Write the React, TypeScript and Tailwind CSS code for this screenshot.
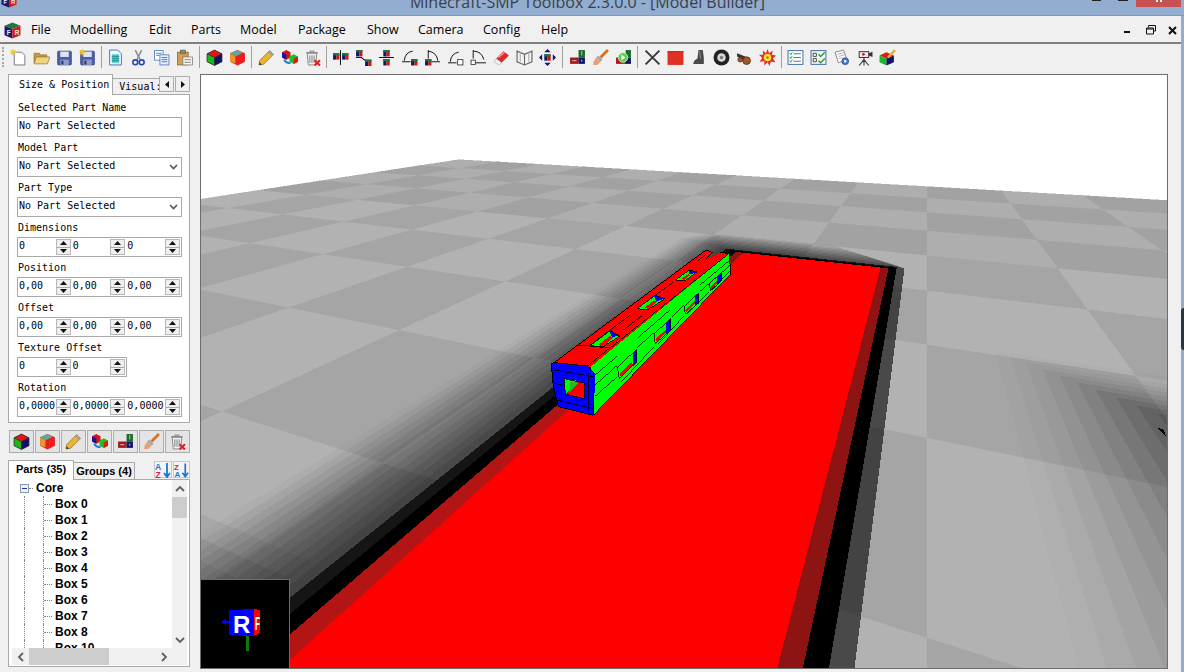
import React from "react";

const mono = { fontFamily: '"DejaVu Sans Mono", monospace' };

/* ---------- ground plane projection of the 3D view ---------- */
const P = (i: number, s: number): number[] => {
  const h = 1 / (0.00182 + 0.00104 * i);
  const d = h / (1 - (h * s) / 1712);
  return [927 + s * d, 88 + d];
};
const pts = (a: number[][]) => a.map((p) => p[0].toFixed(1) + "," + p[1].toFixed(1)).join(" ");
const quad = (i0: number, i1: number, s0: number, s1: number) => pts([P(i0, s0), P(i1, s0), P(i1, s1), P(i0, s1)]);
const S = 0.726;
const far = (i: number): number[] => {
  const h = 1 / (0.00182 + 0.00104 * i);
  return [2000, 88 + (h / 1712) * 2785];
};

function Floor() {
  const cells: React.ReactNode[] = [];
  for (let i = -1; i < 8; i++) {
    for (let j = -9; j < 5; j++) {
      if (i === -1 && j > 0) continue;
      if (i === 0 && j > 3) continue;
      const light = ((i + j) % 2 + 2) % 2 === 0;
      const isFar = i >= 4;
      const fill = light ? (isFar ? "#aeaeae" : "#b2b2b2") : isFar ? "#a2a2a2" : "#a5a5a5";
      cells.push(<polygon key={i + "_" + j} points={quad(i, i + 1, j * S, (j + 1) * S)} fill={fill} stroke={fill} strokeWidth="0.5" />);
    }
  }
  return <g>{cells}</g>;
}

const iN = -1.5;
function Shadow() {
  const cols = [0xae, 0xa6, 0x9d, 0x94, 0x8b, 0x82, 0x79, 0x70, 0x67, 0x5e, 0x55, 0x4d];
  const out: React.ReactNode[] = [];
  let prev = 1;
  const n = cols.length;
  cols.forEach((c, k) => {
    const f = c / 178;
    const a = 1 - f / prev;
    prev = f;
    const t = (n - 1 - k) / (n - 1);
    const sL = -1.282 - (n - 1 - k) * 0.032;
    const iT = 3.545 + (n - 1 - k) * 0.045;
    const sX = -0.125 - t * 0.5;
    out.push(
      <polygon
        key={k}
        points={pts([P(iN, sL), P(iT - t * 0.28, sL), P(iT, sL + t * 0.14), P(iT, sX), P(3.5, -0.125), P(iN, -0.125)])}
        fill="#000"
        fillOpacity={a}
      />
    );
  });
  const lowLeft = [-0.45, -0.52, -0.58, -0.63, -0.67];
  const fan: React.ReactNode[] = [];
  for (let k = 0; k < 11; k++) {
    const lo = -1.2 + k * 0.2;
    const hi = 2.05 - k * 0.05;
    const s = 0.26 + k * 0.05;
    fan.push(<polygon key={k} points={pts([P(hi, s), far(hi), far(lo), P(lo, s)])} fill="#000" fillOpacity={0.015 + 0.009 * k} />);
  }
  return (
    <g>
      {lowLeft.map((v, k) => (
        <polygon key={k} points={quad(-1.5, v, -9, -1.3)} fill="#000" fillOpacity={0.05} />
      ))}
      {fan}
      {out}
    </g>
  );
}

function Platform() {
  return (
    <g>
      <polygon points={quad(iN, 3.53, -1.25, -0.169)} fill="#151515" />
      <polygon points={quad(iN, 3.5, -1.211, -0.169)} fill="#000" />
      <polygon points={quad(iN, 3.46, -1.166, -0.214)} fill="#8e1414" />
      <polygon points={quad(iN, 3.1, -1.166, -1.11)} fill="#b31414" />
      <polygon points={quad(iN, 3.46, -1.114, -0.258)} fill="#ff0000" />
      <polygon points="1158,428 1164,430 1166,437" fill="#000" />
    </g>
  );
}

function Train() {
  const line = (d: string, w = 3) => <path d={d} stroke="#000" strokeWidth={w} fill="none" />;
  return (
    <g transform="translate(530 230) scale(0.33333)">
      <polygon points="72,398 528,60 548,68 528,88 570,68 598,70 182,412 166,408" fill="#ff0000" />
      <polygon points="182,410 598,70 602,132 190,556" fill="#00ff00" />
      {/* front */}
      <polygon points="64,402 75,398 170,408 195,430 192,556 85,530 70,470" fill="#0000ff" />
      <polygon points="102,446 165,460 162,506 106,492" fill="#ff0000" />
      <polygon points="102,446 140,452 112,488 106,492" fill="#00ff00" />
      <polygon points="120,455 145,458 118,486" fill="#22bb22" />
      {/* top windows */}
      <polygon points="182,346 240,302 270,318 216,352" fill="#00ff00" />
      <polygon points="238,302 270,316 246,322" fill="#0000ff" />
      <polygon points="205,345 240,318 250,322 220,350" fill="#ff0000" />
      <polygon points="322,236 374,196 405,206 352,240" fill="#00ff00" />
      <polygon points="372,196 405,206 378,214" fill="#0000ff" />
      <polygon points="345,232 372,212 382,214 355,238" fill="#ff0000" />
      <polygon points="436,150 478,120 500,126 466,152" fill="#00ff00" />
      <polygon points="474,120 500,126 480,134" fill="#0000ff" />
      <polygon points="455,146 475,132 480,136 462,150" fill="#ff0000" />
      {/* side windows */}
      <polygon points="270,430 305,396 308,404 272,440" fill="#ff0000" />
      <polygon points="308,370 320,358 320,396 308,406" fill="#0000ff" />
      <polygon points="378,326 408,298 410,304 380,336" fill="#ff0000" />
      <polygon points="408,280 422,266 422,298 408,310" fill="#0000ff" />
      <polygon points="466,240 494,214 496,220 468,248" fill="#ff0000" />
      <polygon points="494,200 507,188 507,218 494,228" fill="#0000ff" />
      <polygon points="541,172 562,152 564,156 543,178" fill="#ff0000" />
      <polygon points="562,138 575,126 575,152 562,164" fill="#0000ff" />
      {line("M262 412L320 358V396L268 446Z M372 312L422 266V298L376 342Z M462 230L507 188V218L466 252Z M538 162L575 126V152L541 182Z", 2.5)}
      {line("M182 346L240 302L270 318L216 352Z M322 236L374 196L405 206L352 240Z M436 150L478 120L500 126L466 152Z", 2.5)}
      {/* lines on green */}
      {line("M190 440L262 378 M325 322L420 240 M510 165L600 90", 2.5)}
      {line("M192 468L262 406 M322 352L372 308 M425 262L462 226 M510 184L602 105", 2.5)}
      {line("M194 500L262 440 M275 455L372 350 M385 342L462 258 M472 252L538 186 M545 180L602 122", 2.5)}
      {/* top lines */}
      {line("M148 346L240 352 M180 346L300 256 M350 215L430 156 M505 92L528 72 M280 300L335 258", 2.5)}
      {/* outline */}
      {line("M64 402L72 398L528 60L548 68L528 88 M570 68L598 70L602 132L190 556L85 530L70 470L64 402 M75 398L170 408L192 430L192 556 M172 408L598 70", 3)}
      {line("M102 446L165 460L162 506L106 492Z M72 420L190 440 M70 460L100 466 M80 510L190 536 M95 440V520 M175 430V540", 2.5)}
    </g>
  );
}

function Scene() {
  return (
    <svg width="966" height="593" viewBox="201 75 966 593" shapeRendering="crispEdges" className="block">
      <rect x="201" y="75" width="966" height="593" fill="#ffffff" />
      <Floor />
      <Shadow />
      <Platform />
      <Train />
    </svg>
  );
}

/* ---------- toolbar icons ---------- */
const Cube = () => (
  <svg viewBox="0 0 16 16" className="w-[17px] h-[17px]">
    <polygon points="8,1 15,4.5 8,8 1,4.5" fill="#e81414" />
    <polygon points="1,4.5 8,8 8,15.5 1,12" fill="#18b818" />
    <polygon points="15,4.5 8,8 8,15.5 15,12" fill="#10106a" />
    <path d="M8 1L15 4.5V12L8 15.5L1 12V4.5Z M1 4.5L8 8L15 4.5 M8 8V15.5" fill="none" stroke="#222" strokeWidth="0.7" />
  </svg>
);
const Cube2 = () => (
  <svg viewBox="0 0 16 16" className="w-[17px] h-[17px]">
    <polygon points="8,1 15,4 15,12 8,15.5 1,12 1,4" fill="#ee1c1c" />
    <polygon points="1,4 8,1 13,3.5 6,7" fill="#5ea79b" />
    <polygon points="1,4 6,7 6,13.5 1,12" fill="#e8982c" />
  </svg>
);
const Sparkle = () => (
  <g>
    <path d="M0 3H6M3 0V6M1 1L5 5M5 1L1 5" stroke="#e8c830" strokeWidth="1" />
  </g>
);
const Floppy = () => (
  <g>
    <rect x="1.5" y="2" width="13" height="13" rx="1" fill="#4a5ea8" stroke="#2d3a78" strokeWidth="0.6" />
    <rect x="4" y="2.5" width="8" height="5" fill="#dfe4f2" />
    <rect x="4" y="10" width="8" height="5" fill="#8f9bc8" />
    <rect x="5" y="11" width="2" height="3.5" fill="#2d3a78" />
  </g>
);
const Two = ({ x = 0, y = 0 }: { x?: number; y?: number }) => (
  <g transform={`translate(${x} ${y})`}>
    <rect x="0" y="0" width="3" height="6" fill="#14146e" />
    <rect x="3" y="0" width="3" height="6" fill="#c81818" />
    <rect x="0" y="0" width="6" height="2" fill="#1a7a3a" />
  </g>
);
const I = ({ children }: { children: React.ReactNode }) => (
  <svg viewBox="0 0 16 16" className="w-[17px] h-[17px]">
    {children}
  </svg>
);
const Pencil = () => (
  <I>
    <polygon points="11,1.5 14.5,5 5,14.5 1,15 1.5,11" fill="#edb42e" stroke="#7a5a18" strokeWidth="0.6" />
    <polygon points="11,1.5 14.5,5 13,6.5 9.5,3" fill="#a0a0a0" />
    <polygon points="1,15 1.5,12.5 3.5,14.5" fill="#333" />
  </I>
);
const MoveCubes = () => (
  <I>
    <polygon points="1,3 5,1 9,3 9,8 5,10 1,8" fill="#d01818" />
    <polygon points="1,3 5,5 5,10 1,8" fill="#1810a0" />
    <polygon points="8,7 12,5 16,7 16,12 12,14 8,12" fill="#20c020" />
    <polygon points="12,9 16,7 16,12 12,14" fill="#e01818" />
    <path d="M3 10Q5 14 9 13" stroke="#1888e0" strokeWidth="2" fill="none" />
  </I>
);
const Trash = () => (
  <I>
    <path d="M3 4H12L11 15H4Z" fill="#f2f2f2" stroke="#777" strokeWidth="0.8" />
    <path d="M2 3.5H13M5 2H10M5.5 6V13M7.5 6V13M9.5 6V13" stroke="#777" strokeWidth="0.9" />
    <path d="M10 10.5L15 15.5M15 10.5L10 15.5" stroke="#e02020" strokeWidth="2" />
  </I>
);
const Brush = () => (
  <I>
    <path d="M15 1L8 8" stroke="#d8701c" strokeWidth="2.6" />
    <polygon points="6,6 10,10 8,12 4,8" fill="#a8a8a8" />
    <polygon points="4,8 8,12 5,15 1,15 1.5,12" fill="#e8a070" />
  </I>
);
const LShape = () => (
  <I>
    <rect x="9" y="1" width="6" height="7" fill="#1a6a2a" />
    <rect x="1" y="8" width="8" height="6" fill="#a81818" />
    <rect x="9" y="8" width="6" height="6" fill="#14146e" />
    <path d="M12 2V6M3 11H7M12 10V12" stroke="#ddd" strokeWidth="0.8" />
  </I>
);
const Sort = ({ a, b, ca, cb }: { a: string; b: string; ca: string; cb: string }) => (
  <svg viewBox="0 0 16 16" className="w-[16px] h-[16px]">
    <text x="0" y="7.5" fontSize="8.5" fontWeight="700" fill={ca} fontFamily="Liberation Sans, sans-serif">
      {a}
    </text>
    <text x="0.5" y="15.5" fontSize="8.5" fontWeight="700" fill={cb} fontFamily="Liberation Sans, sans-serif">
      {b}
    </text>
    <path d="M12 1V14M9 11L12 15L15 11" stroke="#1878d8" strokeWidth="1.8" fill="none" />
  </svg>
);

const icons: Record<string, React.ReactNode> = {
  new: (
    <I>
      <path d="M4 3H11L14 6V15H4Z" fill="#fff" stroke="#667" strokeWidth="0.8" />
      <Sparkle />
    </I>
  ),
  open: (
    <I>
      <path d="M1 4H6L7 5.5H13V13H1Z" fill="#c89a40" stroke="#8a6a28" strokeWidth="0.6" />
      <path d="M3 7.5H16L13.5 14H1Z" fill="#f0d480" stroke="#8a6a28" strokeWidth="0.6" />
    </I>
  ),
  save: (
    <I>
      <Floppy />
    </I>
  ),
  saveall: (
    <I>
      <Floppy />
      <Sparkle />
    </I>
  ),
  doc: (
    <I>
      <path d="M2.5 1H10L13.5 4.5V15H2.5Z" fill="#fff" stroke="#3a70b8" strokeWidth="0.9" />
      <rect x="4.5" y="5" width="7" height="8" fill="#3cd0c8" />
      <path d="M4.5 7H11.5M4.5 9H11.5M4.5 11H11.5" stroke="#1a6a80" strokeWidth="0.6" />
    </I>
  ),
  cut: (
    <I>
      <path d="M5 1L9.5 10M11 1L6.5 10" stroke="#8a8a98" strokeWidth="1.4" />
      <circle cx="5" cy="12.5" r="2.3" fill="none" stroke="#2848b0" strokeWidth="1.5" />
      <circle cx="11" cy="12.5" r="2.3" fill="none" stroke="#2848b0" strokeWidth="1.5" />
    </I>
  ),
  copy: (
    <I>
      <rect x="1.5" y="1.5" width="8" height="9" fill="#fff" stroke="#5078c0" strokeWidth="0.8" />
      <rect x="6.5" y="5.5" width="8.5" height="9.5" fill="#e8f0ff" stroke="#5078c0" strokeWidth="0.8" />
      <path d="M3 4H8M3 6H6M8 8H13.5M8 10H13.5M8 12H13.5" stroke="#3868b8" strokeWidth="0.8" />
    </I>
  ),
  paste: (
    <I>
      <rect x="1.5" y="3" width="10" height="12" fill="#d0a050" stroke="#806028" strokeWidth="0.7" />
      <rect x="4" y="1" width="5" height="3.5" fill="#8a8a70" stroke="#555" strokeWidth="0.5" />
      <rect x="6.5" y="7.5" width="9" height="7.5" fill="#f4f4f4" stroke="#777" strokeWidth="0.7" />
      <path d="M8 10H14M8 12.5H14" stroke="#777" strokeWidth="0.8" />
    </I>
  ),
  cube: <Cube />,
  cube2: <Cube2 />,
  pencil: <Pencil />,
  move: <MoveCubes />,
  trash: <Trash />,
  a1: (
    <I>
      <path d="M8 1V15" stroke="#111" strokeWidth="1" />
      <Two x={1} y={4} />
      <Two x={9.5} y={4} />
    </I>
  ),
  a2: (
    <I>
      <path d="M1 8H6L10 11H15" stroke="#111" strokeWidth="1" fill="none" />
      <Two x={1} y={1} />
      <Two x={9.5} y={10} />
    </I>
  ),
  a3: (
    <I>
      <path d="M1 8H15" stroke="#111" strokeWidth="1" />
      <Two x={5} y={1} />
      <Two x={5} y={9.5} />
    </I>
  ),
  a4: (
    <I>
      <path d="M1 12H9M11 2Q4 3 3 11" stroke="#111" strokeWidth="0.9" fill="none" />
      <Two x={9.5} y={9.5} />
    </I>
  ),
  a5: (
    <I>
      <path d="M7 12H15M4 1V9M4 2Q12 3 13 11" stroke="#111" strokeWidth="0.9" fill="none" />
      <Two x={1} y={9.5} />
    </I>
  ),
  a6: (
    <I>
      <path d="M1 13H9M11 3Q4 4 3 12" stroke="#111" strokeWidth="0.9" fill="none" />
      <rect x="10" y="10" width="5" height="5" fill="#fff" stroke="#333" strokeWidth="0.8" />
    </I>
  ),
  a7: (
    <I>
      <path d="M5 13H15M3 1V9M3 2Q11 2 13 10" stroke="#111" strokeWidth="0.9" fill="none" />
      <rect x="1" y="10.5" width="4" height="4" fill="#fff" stroke="#333" strokeWidth="0.8" />
    </I>
  ),
  eraser: (
    <I>
      <polygon points="10,2 15,6 8,13 3,9" fill="#e02828" />
      <polygon points="3,9 8,13 5.5,15 1,12" fill="#f0f0f0" stroke="#999" strokeWidth="0.5" />
      <path d="M5 8L11 3" stroke="#f8b0b0" strokeWidth="1" />
    </I>
  ),
  book: (
    <I>
      <path d="M1 2L8 5L15 2V12L8 15L1 12Z M8 5V15" fill="#f4f4f4" stroke="#666" strokeWidth="1.1" />
      <path d="M4 3V12M12 3V12" stroke="#aaa" strokeWidth="1" />
    </I>
  ),
  arrows: (
    <I>
      <path d="M8 0L11 3H5ZM8 16L5 13H11ZM0 8L3 5V11ZM16 8L13 11V5Z" fill="#14146e" />
      <Two x={5} y={5} />
    </I>
  ),
  l1: <LShape />,
  brush: <Brush />,
  l2: (
    <I>
      <rect x="10" y="1" width="5" height="7" fill="#1a6a2a" />
      <rect x="1" y="8" width="8" height="6" fill="#a81818" />
      <rect x="9" y="8" width="6" height="6" fill="#14146e" />
      <circle cx="7.5" cy="8" r="4.5" fill="#58d048" stroke="#d8f0c8" strokeWidth="0.8" />
      <polygon points="6,5.5 10,8 6,10.5" fill="#fff" />
    </I>
  ),
  x: (
    <I>
      <path d="M1.5 1.5L14.5 14.5M14.5 1.5L1.5 14.5" stroke="#3a3a3a" strokeWidth="1.8" />
    </I>
  ),
  redbox: (
    <I>
      <rect x="0.5" y="2" width="15" height="13" fill="#e03020" />
      <rect x="0.5" y="2" width="15" height="1" fill="#c02818" />
    </I>
  ),
  seat: (
    <I>
      <path d="M8 1H12L13 8L13 14H3L4 11L7 9Z" fill="#4a4a4a" />
      <path d="M9 2L10 9" stroke="#888" strokeWidth="1" />
    </I>
  ),
  tire: (
    <I>
      <circle cx="8" cy="8" r="7.5" fill="#222" />
      <circle cx="8" cy="8" r="4" fill="#d8d8d8" />
      <circle cx="8" cy="8" r="1.6" fill="#777" />
    </I>
  ),
  cannon: (
    <I>
      <path d="M1 4L11 8L10 12L1 7Z" fill="#333" />
      <circle cx="10" cy="11" r="3.6" fill="#a0582c" stroke="#5a3010" strokeWidth="0.8" />
      <circle cx="4" cy="10" r="2.2" fill="#a0582c" stroke="#5a3010" strokeWidth="0.8" />
    </I>
  ),
  boom: (
    <I>
      <polygon
        points="8,0 9.5,4 13,1.5 12,5.5 16,6 13,9 15.5,12.5 11,12 10,16 8,12.5 5,15.5 5,11.5 0.5,12 3,8.5 0,5.5 4,5.5 3.5,1.5 6.5,4"
        fill="#e03020"
      />
      <circle cx="8" cy="8" r="3.5" fill="#f0e040" />
      <circle cx="8" cy="8" r="1.2" fill="#e06020" />
    </I>
  ),
  list: (
    <I>
      <rect x="1" y="1.5" width="14" height="13" fill="#fff" stroke="#5078a8" strokeWidth="1" />
      <path d="M6 4.5H13M6 8H13M6 11.5H13" stroke="#5078a8" strokeWidth="1" />
      <path d="M2.5 4L3.5 5.5L5 3M2.5 7.5L3.5 9L5 6.5M2.5 11L3.5 12.5L5 10" stroke="#20a040" strokeWidth="0.9" fill="none" />
    </I>
  ),
  checks: (
    <I>
      <rect x="1" y="1.5" width="14" height="13" fill="#f4f4f4" stroke="#5078a8" strokeWidth="1" />
      <path d="M3 4H6V7H3ZM3 9H6V12H3Z" fill="none" stroke="#333" strokeWidth="0.8" />
      <path d="M8 5L10 7L14 3M8 11L10 13L14 9" stroke="#20a040" strokeWidth="1.4" fill="none" />
    </I>
  ),
  note: (
    <I>
      <path d="M2 3L10 1L13 10L5 13Z" fill="#fff" stroke="#777" strokeWidth="0.8" />
      <path d="M4 5L10 3.5M5 7L11 5.5M5.5 9L9 8" stroke="#999" strokeWidth="0.7" />
      <circle cx="11.5" cy="11.5" r="3.2" fill="#4878c8" stroke="#284880" strokeWidth="0.7" />
      <circle cx="11.5" cy="11.5" r="1.1" fill="#fff" />
    </I>
  ),
  cam: (
    <I>
      <rect x="3" y="2.5" width="9" height="5.5" fill="#e8e8e8" stroke="#333" strokeWidth="0.9" />
      <circle cx="7" cy="5" r="1.3" fill="#d02020" />
      <polygon points="12,4 15.5,2.5 15.5,7.5 12,6" fill="#333" />
      <path d="M7.5 8V11M7.5 10L3 15.5M7.5 10L12 15.5M7.5 10V15.5" stroke="#333" strokeWidth="1" />
    </I>
  ),
  colors: (
    <I>
      <polygon points="7,3 14,6 7,9 0.5,6" fill="#e01818" />
      <polygon points="0.5,6 7,9 7,15.5 0.5,12.5" fill="#18b828" />
      <polygon points="14,6 7,9 7,15.5 14,12.5" fill="#14146e" />
      <path d="M15 1L8.5 8" stroke="#e8b030" strokeWidth="2.4" />
    </I>
  ),
};

const toolbar: { sep: string; items: string[] }[] = [
  { sep: "", items: ["new", "open", "save", "saveall"] },
  { sep: "w-[5px]", items: ["doc", "cut", "copy", "paste"] },
  { sep: "w-[7px]", items: ["cube", "cube2"] },
  { sep: "w-[6px]", items: ["pencil", "move", "trash"] },
  { sep: "w-[5px]", items: ["a1", "a2", "a3", "a4", "a5", "a6", "a7", "eraser", "book", "arrows"] },
  { sep: "w-[7px]", items: ["l1", "brush", "l2"] },
  { sep: "w-[6px]", items: ["x", "redbox", "seat", "tire", "cannon", "boom"] },
  { sep: "w-[5px]", items: ["list", "checks", "note", "cam", "colors"] },
];

const menus: [string, string][] = [
  ["File", "w-[39px]"],
  ["Modelling", "w-[79px]"],
  ["Edit", "w-[42px]"],
  ["Parts", "w-[49px]"],
  ["Model", "w-[58px]"],
  ["Package", "w-[69px]"],
  ["Show", "w-[51px]"],
  ["Camera", "w-[65px]"],
  ["Config", "w-[58px]"],
  ["Help", "w-[40px]"],
];

const Tri = ({ down }: { down?: boolean }) => (
  <svg width="7" height="4" viewBox="0 0 7 4" className="block">
    <polygon points={down ? "0,0 7,0 3.5,4" : "0,4 7,4 3.5,0"} fill="#111" />
  </svg>
);

function Spin({ v, wide }: { v: string; wide?: boolean }) {
  return (
    <div className={"flex h-full items-stretch " + (wide ? "w-[55px]" : "w-[54px]")}>
      <span className="flex-1 pl-[1px] text-[10px] leading-[15px] text-black overflow-hidden whitespace-nowrap" style={mono}>
        {v}
      </span>
      <div className="w-[15px] my-[1px] mr-[1px] flex flex-col gap-[1px] bg-[#a8a8a8] border border-[#b8b8b8]">
        <div className="flex-1 bg-[#efefef] flex items-center justify-center">
          <Tri />
        </div>
        <div className="flex-1 bg-[#efefef] flex items-center justify-center">
          <Tri down />
        </div>
      </div>
    </div>
  );
}

function SpinRow({ label, vals }: { label: string; vals: string[] }) {
  return (
    <div className="flex flex-col">
      <Lab>{label}</Lab>
      <div className={"flex h-[20px] border border-[#a9a9a9] bg-white " + (vals.length === 2 ? "w-[110px]" : "w-[165px]")}>
        {vals.map((v, i) => (
          <Spin key={i} v={v} wide={i > 0} />
        ))}
      </div>
    </div>
  );
}

const Lab = ({ children }: { children: React.ReactNode }) => (
  <div className="h-[20px] pl-[1px] pt-[3px] text-[10px] leading-[16px] text-black whitespace-nowrap" style={mono}>
    {children}
  </div>
);

function Field({ label, select }: { label: string; select?: boolean }) {
  return (
    <div className="flex flex-col">
      <Lab>{label}</Lab>
      <div className="flex items-center justify-between h-[20px] w-[165px] border border-[#a9a9a9] bg-white pl-[1px] pr-[3px] pb-[2px]">
        <span className="text-[10px] leading-[16px] text-black" style={mono}>
          No Part Selected
        </span>
        {select && (
          <svg width="9" height="6" viewBox="0 0 9 6" className="mt-[2px]">
            <path d="M1 1L4.5 4.5L8 1" stroke="#555" strokeWidth="1.6" fill="none" />
          </svg>
        )}
      </div>
    </div>
  );
}

const Chev = ({ dir }: { dir: string }) => {
  const d: Record<string, string> = {
    up: "M1 6L5 2L9 6",
    down: "M1 2L5 6L9 2",
    left: "M6 1L2 5L6 9",
    right: "M2 1L6 5L2 9",
  };
  const vertical = dir === "up" || dir === "down";
  return (
    <svg width={vertical ? 10 : 8} height={vertical ? 8 : 10} viewBox={vertical ? "0 0 10 8" : "0 0 8 10"}>
      <path d={d[dir]} stroke="#606060" strokeWidth="1.8" fill="none" />
    </svg>
  );
};

const TreeRow = ({ t }: { t: string }) => (
  <div className="flex h-[16px] items-center shrink-0 ml-[15px]">
    <span className="w-[19px] h-full border-l border-dotted border-[#808080]" />
    <span className="w-[9px] h-full border-l border-dotted border-[#808080] flex items-center">
      <span className="w-full border-t border-dotted border-[#808080]" />
    </span>
    <span className="ml-[3px] text-[12px] font-bold text-black leading-[16px]">{t}</span>
  </div>
);

function LeftColumn() {
  return (
    <div className="w-[200px] shrink-0 flex flex-col bg-[#f0f0f0]" style={{ fontFamily: '"Liberation Sans", sans-serif' }}>
      {/* tabs */}
      <div className="flex h-[20px] ml-[8px] w-[182px] relative z-10">
        <div className="w-[106px] h-[21px] bg-white border border-b-0 border-[#a9a9a9] pl-[10px] pt-[2px] text-[10px] leading-[16px] text-black whitespace-nowrap" style={mono}>
          Size &amp; Position
        </div>
        <div className="w-[46px] h-[16px] mt-[4px] bg-[#f0f0f0] border-t border-[#a9a9a9] pl-[6px] text-[10px] leading-[16px] overflow-hidden whitespace-nowrap text-black" style={mono}>
          Visual:
        </div>
        <div className="flex mt-[2px] gap-[1px]">
          <div className="w-[15px] h-[16px] bg-[#f0f0f0] border border-[#adadad] flex items-center justify-center">
            <svg width="4" height="7" viewBox="0 0 4 7">
              <polygon points="4,0 4,7 0,3.5" fill="#111" />
            </svg>
          </div>
          <div className="w-[15px] h-[16px] bg-[#f0f0f0] border border-[#adadad] flex items-center justify-center">
            <svg width="4" height="7" viewBox="0 0 4 7">
              <polygon points="0,0 0,7 4,3.5" fill="#111" />
            </svg>
          </div>
        </div>
      </div>
      {/* page */}
      <div className="ml-[8px] w-[182px] h-[329px] bg-white border border-[#a9a9a9] pl-[8px] pt-[2px] flex flex-col">
        <Field label="Selected Part Name" />
        <Field label="Model Part" select />
        <Field label="Part Type" select />
        <SpinRow label="Dimensions" vals={["0", "0", "0"]} />
        <SpinRow label="Position" vals={["0,00", "0,00", "0,00"]} />
        <SpinRow label="Offset" vals={["0,00", "0,00", "0,00"]} />
        <SpinRow label="Texture Offset" vals={["0", "0"]} />
        <SpinRow label="Rotation" vals={["0,0000", "0,0000", "0,0000"]} />
      </div>
      {/* buttons */}
      <div className="flex gap-[1px] ml-[9px] mt-[7px]">
        {["cube", "cube2", "pencil", "move", "l1", "brush", "trash"].map((k) => (
          <div key={k} className="w-[25px] h-[23px] bg-[#e4e4e4] border border-[#adadad] flex items-center justify-center">
            {icons[k]}
          </div>
        ))}
      </div>
      {/* lower tabs */}
      <div className="flex h-[19px] ml-[8px] w-[182px] mt-[7px] relative z-10">
        <div className="w-[66px] h-[20px] bg-white border border-b-0 border-[#a9a9a9] text-center text-[11px] font-bold leading-[17px] text-black">
          Parts (35)
        </div>
        <div className="w-[61px] h-[17px] mt-[2px] bg-[#f0f0f0] border border-b-0 border-l-0 border-[#a9a9a9] text-center text-[11px] font-bold leading-[17px] text-black">
          Groups (4)
        </div>
        <div className="ml-auto flex gap-[1px] mt-[1px]">
          <div className="w-[18px] h-[17px] border border-[#c8c8c8] bg-[#f4f4f4] flex items-center justify-center">
            <Sort a="A" b="Z" ca="#1878d8" cb="#e02040" />
          </div>
          <div className="w-[17px] h-[17px] border border-[#c8c8c8] bg-[#f4f4f4] flex items-center justify-center">
            <Sort a="Z" b="A" ca="#e02040" cb="#1878d8" />
          </div>
        </div>
      </div>
      {/* tree */}
      <div className="ml-[8px] w-[182px] h-[188px] bg-white border border-[#a9a9a9] flex flex-col">
        <div className="flex h-[168px]">
          <div className="w-[163px] overflow-hidden flex flex-col">
            <div className="flex h-[16px] items-center shrink-0 ml-[11px]">
              <span className="w-[9px] h-[9px] border border-[#8a9ab0] bg-[#f0f0f0] flex items-center justify-center">
                <span className="w-[5px] h-[1px] bg-[#1a3a8a]" />
              </span>
              <span className="w-[4px] border-t border-dotted border-[#808080]" />
              <span className="ml-[3px] text-[12px] font-bold text-black leading-[16px]">Core</span>
            </div>
            {["Box 0", "Box 1", "Box 2", "Box 3", "Box 4", "Box 5", "Box 6", "Box 7", "Box 8", "Box 10"].map((t) => (
              <TreeRow key={t} t={t} />
            ))}
          </div>
          <div className="w-[15px] bg-[#f0f0f0] flex flex-col items-center">
            <div className="h-[17px] flex items-center justify-center">
              <Chev dir="up" />
            </div>
            <div className="w-full h-[21px] bg-[#cdcdcd]" />
            <div className="mt-auto h-[17px] flex items-center justify-center">
              <Chev dir="down" />
            </div>
          </div>
        </div>
        <div className="flex h-[17px] ml-[3px] w-[175px] bg-[#f0f0f0] items-center">
          <div className="w-[17px] flex justify-center">
            <Chev dir="left" />
          </div>
          <div className="w-[80px] h-full bg-[#cdcdcd]" />
          <div className="w-[60px] flex justify-end pr-[1px]">
            <Chev dir="right" />
          </div>
        </div>
      </div>
    </div>
  );
}

const AppCube = ({ size = 17 }: { size?: number }) => (
  <svg viewBox="0 0 16 16" width={size} height={size} className="block">
    <polygon points="8,0.5 15.5,3.5 8,6.5 0.5,3.5" fill="#1e7a3a" />
    <polygon points="0.5,3.5 8,6.5 8,15.5 0.5,12.5" fill="#18186e" />
    <polygon points="15.5,3.5 8,6.5 8,15.5 15.5,12.5" fill="#d81818" />
    <text x="2.5" y="12" fontSize="6" fontWeight="700" fill="#eee" fontFamily="Liberation Sans, sans-serif">
      F
    </text>
    <text x="10" y="12" fontSize="6" fontWeight="700" fill="#eee" fontFamily="Liberation Sans, sans-serif">
      R
    </text>
  </svg>
);

export default function App() {
  return (
    <div className="w-[1184px] h-[672px] relative overflow-hidden flex flex-col bg-[#92add0]" style={{ fontFamily: '"Liberation Sans", sans-serif' }}>
      {/* title bar */}
      <div className="h-[16px] shrink-0 flex overflow-hidden relative border-b border-[#7f97ba]">
        <div className="ml-[1px] -mt-[8px] h-[16px]">
          <AppCube size={16} />
        </div>
        <div className="absolute left-0 right-0 -top-[8px] text-center text-[16px] leading-[20px] text-[#3a3f47] pr-[9px]" style={{ fontFamily: '"Open Sans", sans-serif' }}>
          Minecraft-SMP Toolbox 2.3.0.0 - [Model Builder]
        </div>
        <div className="ml-auto flex items-start">
          <span className="w-[9px] h-[1px] bg-[#222] mr-[17px]" />
          <span className="w-[10px] h-[1px] bg-[#222] mr-[8px]" />
          <div className="w-[45px] h-[7px] mr-[3px] bg-[#c75050] flex justify-center gap-[2px]">
            <span className="w-[2px] h-[2px] bg-white" />
            <span className="w-[2px] h-[2px] bg-white" />
          </div>
        </div>
      </div>
      {/* window */}
      <div className="flex-1 mr-[3px] bg-[#f0f0f0] flex flex-col min-h-0">
        {/* menu */}
        <div className="h-[28px] shrink-0 flex items-center pl-[4px] pt-[2px] relative border-b-2 border-[#808080] text-[13px] text-black" style={{ fontFamily: '"Open Sans", sans-serif' }}>
          <AppCube />
          <div className="ml-[10px] flex">
            {menus.map(([t, w]) => (
              <span key={t} className={w + " leading-[18px] text-[12.5px] whitespace-nowrap"}>
                {t}
              </span>
            ))}
          </div>
          <div className="ml-auto flex items-center mr-[4px]">
            <svg width="8" height="8" viewBox="0 0 8 8" className="mr-[15px]">
              <rect x="1" y="5" width="6" height="2" fill="#111" />
            </svg>
            <svg width="10" height="10" viewBox="0 0 10 10" className="mr-[12px]">
              <path d="M2.5 2.5V0.5H9.5V6H7.5M0.5 3H7.5V9H0.5ZM0.5 4H7.5" stroke="#111" strokeWidth="1" fill="none" />
            </svg>
            <svg width="9" height="9" viewBox="0 0 9 9">
              <path d="M1 1L8 8M8 1L1 8" stroke="#111" strokeWidth="2" />
            </svg>
          </div>
        </div>
        {/* toolbar */}
        <div className="h-[30px] shrink-0 flex items-center pl-[2px] pb-[4px]">
          <div className="w-[3px] h-[20px] mr-[2px] border-l-2 border-dotted border-[#a8a8a8]" />
          <div className="flex items-center -ml-[0.5px]">
            {toolbar.map((g, gi) => (
              <React.Fragment key={gi}>
                {g.sep && (
                  <div className={g.sep + " h-[22px] flex justify-center"}>
                    <span className="w-[1px] h-full bg-[#a0a0a0]" />
                  </div>
                )}
                {g.items.map((k) => (
                  <div key={k} className="w-[23px] h-[24px] flex items-center justify-center">
                    {icons[k]}
                  </div>
                ))}
              </React.Fragment>
            ))}
          </div>
        </div>
        {/* body */}
        <div className="flex flex-1 min-h-0">
          <LeftColumn />
          <div className="relative w-[968px] h-[595px] border border-[#6d6d6d] bg-white shrink-0">
            <Scene />
            <div className="absolute left-0 bottom-0 w-[89px] h-[89px] bg-black border-t border-r border-[#6d6d6d]">
              <svg width="88" height="88" viewBox="0 0 88 88" shapeRendering="crispEdges" className="block">
                <polygon points="20,42 25,39 25,45" fill="#0000ff" />
                <rect x="24" y="41" width="6" height="2" fill="#0000ff" />
                <polygon points="28,30 53,29 53,56 28,55" fill="#0000ff" />
                <polygon points="53,29 59,30 59,53 53,56" fill="#ff0000" />
                <rect x="45" y="56" width="3" height="15" fill="#0d7a0d" />
                <text x="32" y="53" fontSize="24" fontWeight="700" fill="#ffffff" fontFamily="Liberation Sans, sans-serif" shapeRendering="auto">
                  R
                </text>
                <text transform="translate(54 50) scale(0.45 1)" fontSize="18" fontWeight="700" fill="#ffffff" fontFamily="Liberation Sans, sans-serif" shapeRendering="auto">
                  F
                </text>
              </svg>
            </div>
          </div>
        </div>
      </div>
      <div className="absolute right-0 top-[308px] w-[3px] h-[42px] rounded-l-sm bg-[#2a3340]" />
    </div>
  );
}
